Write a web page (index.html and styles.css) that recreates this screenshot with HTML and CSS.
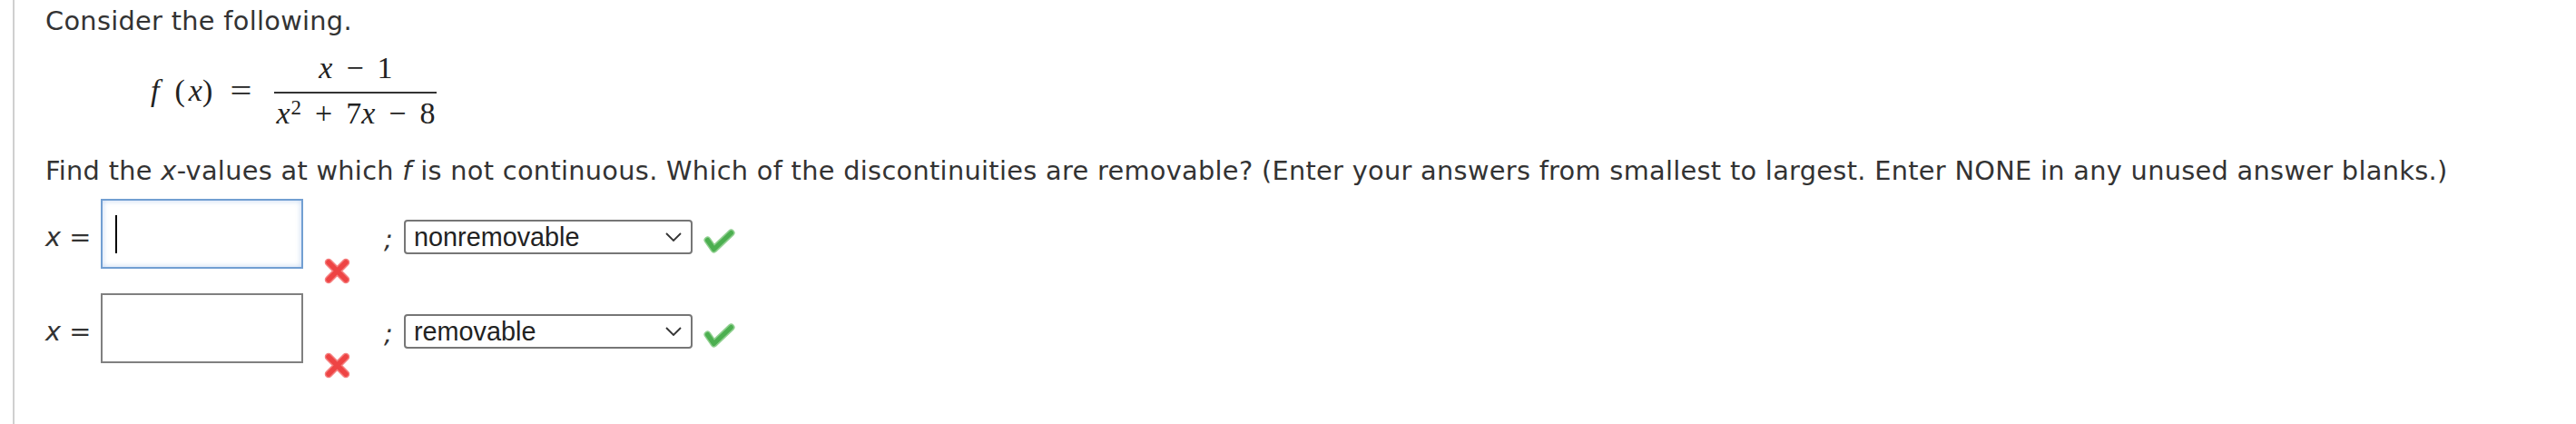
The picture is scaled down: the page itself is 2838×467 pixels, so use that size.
FILE: index.html
```html
<!DOCTYPE html>
<html lang="en">
<head>
<meta charset="utf-8">
<title>Discontinuities</title>
<link rel="stylesheet" href="styles.css">
</head>
<body>
<div class="panel">
  <p class="intro">Consider the following.</p>
  <div class="formula">
    <span class="lhs"><i class="mf">f</i><span class="paren">(</span><i>x</i><span>)</span><span class="eq">=</span></span>
    <span class="frac">
      <span class="num"><i>x</i><span class="op">−</span>1</span>
      <span class="bar"></span>
      <span class="den"><i>x</i><span class="sup">2</span><span class="op">+</span>7<i>x</i><span class="op">−</span>8</span>
    </span>
  </div>
  <p class="prompt">Find the <i>x</i>-values at which <i>f</i> is not continuous. Which of the discontinuities are removable? (Enter your answers from smallest to largest. Enter NONE in any unused answer blanks.)</p>

  <div class="row">
    <span class="lbl"><i>x</i> =</span>
    <span class="box focus"><span class="caret"></span></span>
    <svg class="xmark" viewBox="0 0 29 29" width="29" height="29"><path d="M5 5 L24 24 M24 5 L5 24" stroke="#f58080" stroke-width="8.5" stroke-linecap="round" fill="none"/><path d="M5 5 L24 24 M24 5 L5 24" stroke="#ee4444" stroke-width="5.5" stroke-linecap="round" fill="none"/></svg>
    <span class="semi">;</span>
    <span class="sel"><span>nonremovable</span><svg class="chev" viewBox="0 0 18 10" width="18" height="10"><path d="M1 1 L9 9 L17 1" stroke="#333" stroke-width="1.8" fill="none"/></svg></span>
    <svg class="check" viewBox="0 0 35 27" width="35" height="27"><path d="M4.5 12.5 L11.5 22.5 L30.5 4.5" stroke="#8fcf8f" stroke-width="8" stroke-linecap="round" stroke-linejoin="round" fill="none"/><path d="M4.5 12.5 L11.5 22.5 L30.5 4.5" stroke="#4caf50" stroke-width="5" stroke-linecap="round" stroke-linejoin="round" fill="none"/></svg>
  </div>

  <div class="row">
    <span class="lbl"><i>x</i> =</span>
    <span class="box"></span>
    <svg class="xmark" viewBox="0 0 29 29" width="29" height="29"><path d="M5 5 L24 24 M24 5 L5 24" stroke="#f58080" stroke-width="8.5" stroke-linecap="round" fill="none"/><path d="M5 5 L24 24 M24 5 L5 24" stroke="#ee4444" stroke-width="5.5" stroke-linecap="round" fill="none"/></svg>
    <span class="semi">;</span>
    <span class="sel"><span>removable</span><svg class="chev" viewBox="0 0 18 10" width="18" height="10"><path d="M1 1 L9 9 L17 1" stroke="#333" stroke-width="1.8" fill="none"/></svg></span>
    <svg class="check" viewBox="0 0 35 27" width="35" height="27"><path d="M4.5 12.5 L11.5 22.5 L30.5 4.5" stroke="#8fcf8f" stroke-width="8" stroke-linecap="round" stroke-linejoin="round" fill="none"/><path d="M4.5 12.5 L11.5 22.5 L30.5 4.5" stroke="#4caf50" stroke-width="5" stroke-linecap="round" stroke-linejoin="round" fill="none"/></svg>
  </div>
</div>
</body>
</html>
```

FILE: styles.css
```css
html, body {
  margin: 0;
  padding: 0;
  background: #ffffff;
}

.panel {
  margin-left: 14px;
  border-left: 2px solid #d0d0d0;
  height: 467px;
  box-sizing: border-box;
  padding-left: 34px;
  padding-top: 6px;
  font-family: "DejaVu Sans", Verdana, sans-serif;
  font-size: 28.8px;
  line-height: 34.56px;
  color: #333333;
}

.intro {
  margin: 0;
  white-space: nowrap;
  letter-spacing: 0.3px;
}

.formula {
  display: flex;
  align-items: center;
  margin: 17px 0 0 116px;
  font-family: "Liberation Serif", "Times New Roman", serif;
  font-size: 34px;
  line-height: 34px;
  color: #222222;
}

.lhs {
  display: flex;
  align-items: baseline;
}

.mf {
  margin-right: 17px;
}

.paren {
  margin-right: 4px;
}

.eq {
  margin-left: 22px;
  margin-right: 27px;
  display: inline-block;
  transform: scaleX(1.25);
}

.frac {
  display: flex;
  flex-direction: column;
  align-items: center;
}

.num {
  display: block;
  height: 34px;
  padding-bottom: 9px;
}

.bar {
  display: block;
  align-self: stretch;
  height: 2.5px;
  background: #333333;
}

.den {
  display: block;
  height: 34px;
  padding-top: 5px;
  padding-left: 2px;
  padding-right: 2px;
}

.op {
  display: inline-block;
  margin: 0 15px;
}

.sup {
  position: relative;
  top: -10px;
  font-size: 23px;
  line-height: 0;
  margin-left: 1px;
}

.prompt {
  margin: 29px 0 0 0;
  white-space: nowrap;
  letter-spacing: 0.3px;
}

.row {
  display: flex;
  align-items: flex-start;
  height: 77px;
  margin-top: 13px;
}

.row + .row {
  margin-top: 27px;
}

.lbl {
  flex: none;
  width: 61px;
  margin-top: 25px;
}

.box {
  flex: none;
  display: block;
  width: 223px;
  height: 77px;
  box-sizing: border-box;
  border: 2px solid #808080;
  background: #ffffff;
}

.box.focus {
  border-color: #729fd2;
  box-shadow: inset 0 0 6px rgba(120, 165, 225, 0.45);
}

.caret {
  display: block;
  width: 2px;
  height: 42px;
  margin: 16px 0 0 14px;
  background: #000000;
}

.xmark {
  flex: none;
  margin-left: 23px;
  margin-top: 65px;
}

.semi {
  flex: none;
  width: 22px;
  margin-left: 37px;
  margin-top: 27px;
  font-style: italic;
}

.sel {
  flex: none;
  display: flex;
  align-items: center;
  justify-content: space-between;
  box-sizing: border-box;
  width: 318px;
  height: 38px;
  margin-top: 23px;
  padding: 0 10px 0 9px;
  border: 2px solid #767676;
  border-radius: 4px;
  font-family: "Liberation Sans", Arial, sans-serif;
  font-size: 28.8px;
  line-height: 30px;
  color: #222222;
}

.chev {
  flex: none;
}

.check {
  flex: none;
  margin-left: 12px;
  margin-top: 33px;
}
```
